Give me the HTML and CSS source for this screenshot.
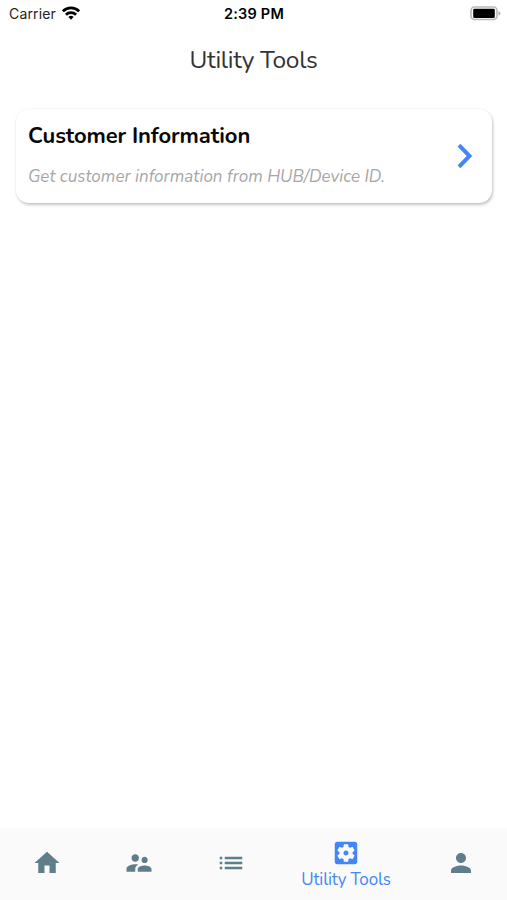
FILE: index.html
```html
<!DOCTYPE html>
<html lang="en">
<head>
<meta charset="utf-8">
<title>Utility Tools</title>
<link rel="stylesheet" href="styles.css">
</head>
<body>
<div class="app">
  <header class="status">
    <div class="carrier"><span class="carrier-name">Carrier</span>
      <svg class="wifi" viewBox="0 0 18 14"><g fill="none" stroke="#000" stroke-width="2.7"><path d="M.9 5.300a11.500 11.500 0 0 1 16.200 0"/><path d="M3.900 8.700a7.300 7.300 0 0 1 10.200 0"/></g><path d="M9 13.800l-2.600-2.700a3.700 3.700 0 0 1 5.200 0z"/></svg>
    </div>
    <time class="clock">2:39 PM</time>
    <svg class="battery" viewBox="0 0 31 15"><rect x="1" y="1" width="26" height="12.5" rx="3.5" fill="#fff" stroke="#b9b9b9" stroke-width="1.6"/><rect x="3.2" y="2.700" width="21.6" height="9.200" rx="1.2"/><path d="M28.5 5v4.5q2-.7 2-2.25T28.5 5z" fill="#b0b0b0"/></svg>
  </header>
  <h1 class="title">Utility Tools</h1>
  <main class="content">
    <a class="card">
      <div class="card-body">
        <h2 class="card-title">Customer Information</h2>
        <p class="card-note">Get customer information from HUB/Device ID.</p>
      </div>
      <svg class="chevron" viewBox="0 0 16 26"><path d="M2 2.200L12.500 13 2 23.800" fill="none" stroke="#4287f5" stroke-width="4"/></svg>
    </a>
  </main>
  <nav class="tabs">
    <a class="tab"><svg class="icon" viewBox="0 0 24 24"><path d="M10 20v-6h4v6h5v-8h3L12 3 2 12h3v8z"/></svg></a>
    <a class="tab"><svg class="icon" viewBox="0 0 24 24"><path d="M16.5 12c1.38 0 2.49-1.12 2.49-2.5S17.88 7 16.5 7 14 8.12 14 9.5s1.12 2.5 2.5 2.5zM9 11c1.66 0 2.99-1.34 2.99-3S10.66 5 9 5 6 6.34 6 8s1.34 3 3 3zm7.5 3c-1.83 0-5.5.92-5.5 2.75V19h11v-2.25c0-1.83-3.67-2.75-5.5-2.75zM9 13c-2.33 0-7 1.17-7 3.5V19h7v-2.25c0-.85.33-2.34 2.37-3.47C10.5 13.1 9.66 13 9 13z"/></svg></a>
    <a class="tab"><svg class="icon" viewBox="0 0 24 24"><path d="M3 13h2v-2H3v2zm0 4h2v-2H3v2zm0-8h2V7H3v2zm4 4h14v-2H7v2zm0 4h14v-2H7v2zM7 7v2h14V7H7z"/></svg></a>
    <a class="tab tab-active"><svg class="icon" viewBox="0 0 24 24"><path d="M12 10c-1.100 0-2 .9-2 2s.9 2 2 2 2-.9 2-2-.9-2-2-2zm7-7H5c-1.110 0-2 .9-2 2v14c0 1.100.890 2 2 2h14c1.110 0 2-.9 2-2V5c0-1.100-.890-2-2-2zm-1.750 9c0 .230-.020.460-.050.680l1.480 1.160c.130.110.170.300.080.450l-1.400 2.420c-.090.150-.270.210-.430.150l-1.740-.700c-.360.280-.760.510-1.180.690l-.260 1.850c-.030.170-.180.300-.350.300h-2.800c-.170 0-.320-.130-.350-.290l-.260-1.850c-.430-.180-.820-.410-1.180-.690l-1.740.700c-.160.060-.340 0-.430-.150l-1.400-2.420c-.090-.150-.050-.340.080-.450l1.480-1.160c-.030-.230-.050-.460-.050-.690s.020-.460.050-.680l-1.480-1.160c-.130-.110-.170-.300-.080-.450l1.400-2.420c.090-.150.270-.210.430-.150l1.740.700c.360-.280.760-.510 1.180-.690l.260-1.850c.030-.170.180-.300.350-.300h2.800c.170 0 .320.130.350.290l.260 1.850c.430.180.820.410 1.180.690l1.740-.700c.160-.060.340 0 .430.150l1.400 2.420c.090.150.050.340-.080.450l-1.480 1.160c.030.230.050.460.050.690z"/></svg><span class="tab-label">Utility Tools</span></a>
    <a class="tab"><svg class="icon" viewBox="0 0 24 24"><path d="M12 12c2.210 0 4-1.790 4-4s-1.790-4-4-4-4 1.790-4 4 1.790 4 4 4zm0 2c-2.670 0-8 1.340-8 4v2h16v-2c0-2.660-5.330-4-8-4z"/></svg></a>
  </nav>
</div>
</body>
</html>
```
FILE: styles.css
```css
* { box-sizing: border-box; }
body { margin: 0; background: #fff; font-family: Nunito, Lato, sans-serif; }
h1, h2, p { margin: 0; font-weight: 400; }
.app { height: 900px; display: flex; flex-direction: column; overflow: hidden; }
.status { height: 28px; padding: 0 7px 0 9px; display: grid; grid-template-columns: 1fr auto 1fr; align-items: center; font-family: Inter, sans-serif; font-size: 14px; line-height: 28px; }
.carrier { display: flex; align-items: center; gap: 6px; color: #222; }
.carrier-name { letter-spacing: .15px; }
.wifi { width: 18px; height: 14px; margin-top: -3px; }
.clock { font-size: 14.5px; font-weight: 600; letter-spacing: .2px; margin-right: 1px; }
.battery { width: 31px; height: 15px; justify-self: end; margin: -2px -1px 0 0; }
.title { height: 64px; text-align: center; font-size: 24.5px; letter-spacing: -.3px; line-height: 64px; color: #333; }
.content { flex: 1; padding: 16.5px 15.5px; }
.card { height: 94px; display: flex; align-items: center; justify-content: space-between; padding: 0 18.5px 0 12.5px; border-radius: 13px; background: #fff; box-shadow: 1px 2px 3px rgba(0, 0, 0, .22), 0 0 2px rgba(0, 0, 0, .08); }
.card-title { font-size: 22px; font-weight: 700; letter-spacing: -.1px; line-height: 30px; color: #080808; white-space: nowrap; }
.card-body { margin-top: -1px; }
.card-note { margin-top: 14px; font-size: 17px; font-style: italic; letter-spacing: .03px; line-height: 24px; color: #a6a6a6; white-space: nowrap; }
.chevron { width: 16px; height: 26px; }
.tabs { height: 72px; padding-left: 1px; display: grid; grid-template-columns: 92px 92px 92px 138px 92px; background: #fafafa; }
.tab { display: flex; flex-direction: column; align-items: center; justify-content: center; color: #607d8b; padding-bottom: 3px; }
.tab-active { color: #4287f5; padding-bottom: 0; }
.icon { width: 30px; height: 30px; fill: currentColor; }
.tab-label { margin-top: 1px; font-size: 17px; letter-spacing: -.15px; line-height: 22px; white-space: nowrap; }
```
